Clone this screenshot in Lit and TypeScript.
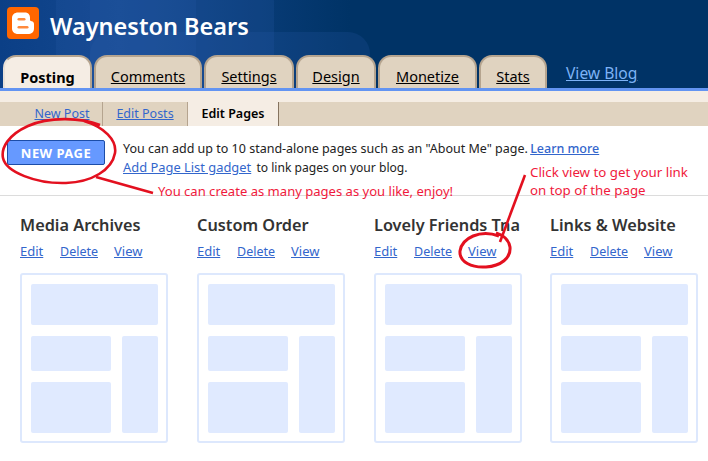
import { LitElement, html, css, svg } from "lit";
import { customElement } from "lit/decorators.js";

const TABS = [
  { label: "Posting", w: 89, active: true },
  { label: "Comments", w: 108 },
  { label: "Settings", w: 90 },
  { label: "Design", w: 80 },
  { label: "Monetize", w: 99 },
  { label: "Stats", w: 68 },
];
const PAGES = ["Media Archives", "Custom Order", "Lovely Friends Tna", "Links & Website"];

@customElement("app-root")
export class AppRoot extends LitElement {
  static styles = css`
    :host {
      display: block;
      position: relative;
      width: 708px;
      height: 461px;
      overflow: hidden;
      background: #fff;
      font-family: "Noto Sans", "Open Sans", sans-serif;
      font-size: 12.5px;
      color: #222;
    }
    a { color: #3366cc; text-decoration: underline; }
    .header {
      position: relative;
      height: 88px;
      background: linear-gradient(90deg, #0b3f86 0, #14488f 120px, #003366 350px);
      border-bottom: 3px solid #6394f2;
      box-sizing: content-box;
      overflow: hidden;
    }
    .deco {
      position: absolute;
      border-radius: 22px;
      background: rgba(40, 90, 170, 0.22);
    }
    .d1 { left: 56px; top: -20px; width: 140px; height: 140px; }
    .d2 { left: 90px; top: -20px; width: 184px; height: 140px; }
    .d3 { left: 90px; top: 32px; width: 280px; height: 100px; }
    .brand {
      position: relative;
      display: flex;
      align-items: center;
      gap: 11px;
      padding: 7px 0 0 7px;
      height: 32px;
    }
    .brand svg { display: block; }
    .brand h1 {
      margin: 5px 0 0;
      font-size: 23.5px;
      font-weight: 600;
      color: #fff;
      line-height: 32px;
    }
    .tabs {
      position: absolute;
      left: 3px;
      bottom: -3px;
      display: flex;
      gap: 2px;
      align-items: flex-end;
    }
    .tab {
      box-sizing: border-box;
      height: 36px;
      display: flex;
      align-items: center;
      justify-content: center;
      padding-top: 5px;
      background: #e0d3c0;
      border: 2px solid #b5a48f;
      border-bottom: 1px solid #85735f;
      border-radius: 13px 13px 0 0;
      color: #000;
      font-size: 14.5px;
      text-decoration: underline;
    }
    .tab.active {
      background: #f5ede4;
      border-color: #b5a48f;
      border-left-color: #e8e0d8;
      border-top-color: #b5a48f;
      border-bottom: 0;
      font-weight: 700;
      text-decoration: none;
    }
    .viewblog {
      color: #7db2f5;
      font-size: 15.6px;
      margin: 0 0 4px 17px;
      line-height: 28px;
    }
    .strip { height: 11px; background: #f5ede4; }
    .subnav {
      display: flex;
      height: 24px;
      background: #e0d3c0;
      font-size: 12.5px;
      line-height: 24px;
    }
    .sub {
      box-sizing: border-box;
      text-align: center;
      border-right: 1px solid #b5a48f;
    }
    .s1 { width: 103px; padding-left: 22px; }
    .s2 { width: 85px; }
    .s3 {
      width: 91px;
      background: #f5ede4;
      color: #000;
      font-weight: 600;
      border-right: 1px solid #85735f;
    }
    .intro {
      display: flex;
      align-items: flex-start;
      height: 70px;
      box-sizing: border-box;
      padding: 14px 0 0 7px;
      gap: 18px;
      border-bottom: 1px solid #dcdcdc;
    }
    .btn {
      box-sizing: border-box;
      width: 98px;
      height: 25px;
      background: #6699ff;
      border: 1px solid #1c4da8;
      border-radius: 2px;
      color: #fff;
      font-weight: 700;
      font-size: 13px;
      letter-spacing: 0.45px;
      text-align: center;
      line-height: 24px;
    }
    .msg { line-height: 18px; margin-top: 0; }
    .msg p { margin: 0; }
    .learn { font-weight: 500; margin-left: -1px; }
    .gadget { font-size: 12.9px; }
    .tail { font-size: 12.1px; margin-left: 2px; }
    .grid {
      display: grid;
      grid-template-columns: 177px 177px 176px 158px;
      padding: 18px 0 0 20px;
    }
    .col { overflow: hidden; }
    .col h2 {
      margin: 0;
      width: 150px;
      height: 22px;
      overflow: hidden;
      white-space: nowrap;
      font-size: 16.3px;
      font-weight: 600;
      line-height: 22px;
      color: #333;
    }
    .links {
      display: flex;
      align-items: baseline;
      margin-top: 5px;
      height: 20px;
      line-height: 20px;
      font-size: 13px;
    }
    .links a:nth-child(1) { width: 40px; }
    .links a:nth-child(2) { width: 54px; font-size: 12.5px; }
    .links a { display: block; }
    .thumb {
      box-sizing: border-box;
      width: 148px;
      height: 170px;
      margin-top: 12px;
      padding: 9px 9px 10px 9px;
      border: 2px solid #dde8fd;
      border-radius: 3px;
      display: grid;
      grid-template-columns: 80px 36px;
      grid-template-rows: 41px 35px 51px;
      gap: 11px;
      background: #fff;
    }
    .thumb div { background: #e0eaff; border-radius: 2px; }
    .thumb .a { grid-column: 1 / 3; }
    .thumb .d { grid-column: 2; grid-row: 2 / 4; }
    .overlay {
      position: absolute;
      inset: 0;
      pointer-events: none;
    }
    .note {
      position: absolute;
      color: #f01a3c;
      line-height: 18px;
      white-space: nowrap;
    }
    .n1 { left: 158px; top: 182px; font-size: 13.05px; }
    .n2 { left: 530px; top: 163px; font-size: 13.3px; }
  `;

  render() {
    return html`
      <div class="header">
        <div class="deco d1"></div>
        <div class="deco d2"></div>
        <div class="deco d3"></div>
        <div class="brand">
          <svg width="32" height="32" viewBox="0 0 32 32">
            <rect width="32" height="32" rx="4" fill="#ff6600" />
            <path
              d="M11 5.5h7c3.2 0 5 2.2 5 5v2.2c0 1 .7 1.3 1.6 1.5 1.6.3 2.4 1.3 2.4 3v4.3c0 3.8-2.7 5.5-6 5.5H11c-3.3 0-6-2.2-6-5.5V11c0-3.3 2.7-5.5 6-5.5z"
              fill="#fff"
            />
            <rect x="10.5" y="11" width="8" height="2.6" rx="1.3" fill="#ff8a3c" />
            <rect x="10.5" y="19" width="11" height="2.6" rx="1.3" fill="#ff8a3c" />
          </svg>
          <h1>Wayneston Bears</h1>
        </div>
        <div class="tabs">
          ${TABS.map(
            (t) => html`<div class="tab ${t.active ? "active" : ""}" style="width:${t.w}px">${t.label}</div>`
          )}
          <a class="viewblog">View Blog</a>
        </div>
      </div>
      <div class="strip"></div>
      <div class="subnav">
        <div class="sub s1"><a>New Post</a></div>
        <div class="sub s2"><a>Edit Posts</a></div>
        <div class="sub s3">Edit Pages</div>
      </div>
      <div class="intro">
        <div class="btn">NEW PAGE</div>
        <div class="msg">
          <p>You can add up to 10 stand-alone pages such as an "About Me" page. <a class="learn">Learn more</a></p>
          <p><a class="gadget">Add Page List gadget</a><span class="tail"> to link pages on your blog.</span></p>
        </div>
      </div>
      <div class="grid">
        ${PAGES.map(
          (p) => html`<div class="col">
            <h2>${p}</h2>
            <div class="links"><a>Edit</a><a>Delete</a><a>View</a></div>
            <div class="thumb">
              <div class="a"></div>
              <div class="b"></div>
              <div class="d"></div>
              <div class="c"></div>
            </div>
          </div>`
        )}
      </div>
      <svg class="overlay" width="708" height="461" viewBox="0 0 708 461" fill="none" stroke="#e3101f" stroke-width="2.6">
        ${svg`
          <path d="M100 125C82 118 50 116 28 126C8 135 1 148 3 158C6 172 36 184 66 183C92 182 112 170 115 153C117 140 104 127 84 121" />
          <path d="M96 177L153 193" />
          <path d="M525 175L500 242" />
          <path d="M499 236C480 229 462 238 460 251C459 262 472 268 486 267C501 266 511 258 510 247C509 240 503 235 496 233" stroke-width="3" />
        `}
      </svg>
      <div class="note n1">You can create as many pages as you like, enjoy!</div>
      <div class="note n2">Click view to get your link<br />on top of the page</div>
    `;
  }
}
